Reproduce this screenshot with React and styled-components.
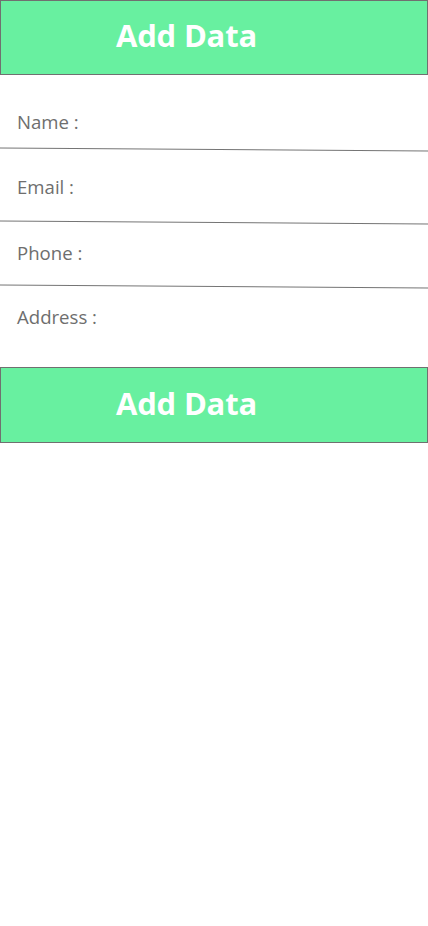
import React from "react";
import styled, { createGlobalStyle } from "styled-components";

const GlobalStyle = createGlobalStyle`
  body {
    margin: 0;
    background: #ffffff;
    font-family: "Open Sans", "Noto Sans", sans-serif;
  }
`;

const Page = styled.div`
  width: 428px;
  min-height: 926px;
  display: flex;
  flex-direction: column;
  background: #ffffff;
`;

const AddButton = styled.button`
  display: flex;
  align-items: center;
  width: 100%;
  height: ${({ $height }) => $height || 75}px;
  margin: 0;
  padding: 0 0 5px 115px;
  box-sizing: border-box;
  background: #68f0a0;
  border: 1px solid #707070;
  color: #ffffff;
  font-family: "Open Sans", "Noto Sans", sans-serif;
  font-size: 31px;
  font-weight: 700;
  letter-spacing: -0.2px;
  cursor: pointer;
`;

const Form = styled.form`
  display: flex;
  flex-direction: column;
`;

const Field = styled.label`
  position: relative;
  display: flex;
  align-items: center;
  padding: ${({ $top }) => $top}px 17px ${({ $bottom }) => $bottom}px;
  &::after {
    content: "";
    display: ${({ $line }) => ($line ? "block" : "none")};
    position: absolute;
    left: 0;
    right: 0;
    bottom: 0;
    height: 1px;
    background: #757575;
    transform: rotate(0.4deg);
  }
`;

const Label = styled.span`
  font-size: 18.6px;
  line-height: 24px;
  color: #6e6e6e;
  white-space: pre;
`;

const fields = [
  { label: "Name :", top: 35, bottom: 16, line: true },
  { label: "Email :", top: 25, bottom: 24, line: true },
  { label: "Phone :", top: 18, bottom: 22, line: true },
  { label: "Address :", top: 18, bottom: 38, line: false },
];

export default function App() {
  return (
    <>
      <GlobalStyle />
      <Page>
        <AddButton type="button">Add Data</AddButton>
        <Form>
          {fields.map((f) => (
            <Field key={f.label} $top={f.top} $bottom={f.bottom} $line={f.line}>
              <Label>{f.label}</Label>
            </Field>
          ))}
        </Form>
        <AddButton type="button" $height={76}>Add Data</AddButton>
      </Page>
    </>
  );
}
